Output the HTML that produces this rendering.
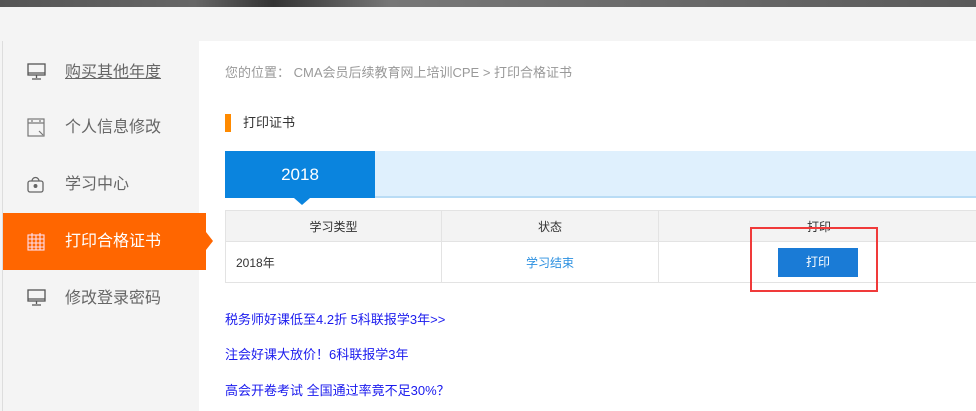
<!DOCTYPE html>
<html><head><meta charset="utf-8"><style>
*{margin:0;padding:0;box-sizing:border-box}
body{width:976px;height:411px;overflow:hidden;background:#f4f4f4;font-family:"Liberation Sans","Noto Sans CJK SC",sans-serif;position:relative}
.top{position:absolute;left:0;top:0;width:976px;height:7px;background:linear-gradient(90deg,#555 0%,#666 20%,#333 28%,#777 40%,#5a5a5a 100%)}
.side{position:absolute;left:2px;top:41px;width:197px;height:370px;background:#f4f4f4;border-left:1px solid #ddd;z-index:2}
.item{position:absolute;left:0;width:197px;height:57px;font-size:16px;color:#666;line-height:57px;padding-left:62px}
.item svg{position:absolute;left:24px;top:19px}
.act{background:#ff6600;color:#fff;width:203px}
.act:after{content:"";position:absolute;right:-7px;top:19px;border-left:7px solid #ff6600;border-top:9px solid transparent;border-bottom:9px solid transparent}
.main{position:absolute;left:199px;top:41px;width:777px;height:370px;background:#fff}
.crumb{position:absolute;left:26px;top:21px;font-size:13px;color:#999}
.ttl{position:absolute;left:26px;top:73px;font-size:13px;color:#333;padding-left:18px;line-height:18px}
.ttl:before{content:"";position:absolute;left:0;top:0;width:6px;height:18px;background:#ff8a00}
.bar{position:absolute;left:26px;top:110px;width:760px;height:47px;background:#dff0fd;border-bottom:2px solid #b9dcf5}
.tab{position:absolute;left:26px;top:110px;width:150px;height:47px;background:#0a84de;color:#fff;font-size:17px;text-align:center;line-height:47px}
.tri{position:absolute;left:95px;top:157px;border-top:7px solid #0a84de;border-left:8px solid transparent;border-right:8px solid transparent}
table{position:absolute;left:26px;top:169px;border-collapse:collapse;font-size:12px;color:#333;table-layout:fixed;width:800px}
td{border:1px solid #e3e3e3;height:31px;text-align:center}
tr.h td{background:#f3f3f3}
tr.d td{height:41px;background:#fff}
.btn{display:inline-block;width:80px;height:29px;background:#1a7bd6;color:#fff;line-height:29px;text-align:center}
.red{position:absolute;left:551px;top:186px;width:128px;height:65px;border:2px solid #f03a3a}
.lk{position:absolute;left:26px;font-size:13px;color:#1a1aee}
</style></head><body>
<div class="top"></div>
<div class="side">
<div class="item" style="top:3px"><svg width="20" height="18" viewBox="0 0 20 18" fill="none" stroke="#555" stroke-width="1.3"><rect x="1" y="1" width="17" height="11"/><path d="M1 10h17M9.5 12v3M5 16h9"/></svg><span style="text-decoration:underline">购买其他年度</span></div>
<div class="item" style="top:58px"><svg width="20" height="20" viewBox="0 0 20 20" fill="none" stroke="#777" stroke-width="1.2"><rect x="1" y="1" width="16" height="17"/><path d="M1 5h16M5 2v2M13 2v2M12 13l4 4"/></svg>个人信息修改</div>
<div class="item" style="top:115px"><svg width="20" height="20" viewBox="0 0 20 20" fill="none" stroke="#666" stroke-width="1.3"><rect x="1" y="6" width="15" height="11" rx="2"/><path d="M5 6a3.5 3.5 0 0 1 7 0"/><circle cx="8.5" cy="11" r="1.3" fill="#666"/></svg>学习中心</div>
<div class="item act" style="top:172px"><svg width="20" height="20" viewBox="0 0 20 20" fill="none" stroke="#fde" stroke-width="1.1"><rect x="1" y="3" width="16" height="15"/><path d="M1 7h16M1 11h16M1 15h16M5 3v15M9 3v15M13 3v15M5 1v3M13 1v3"/></svg>打印合格证书</div>
<div class="item" style="top:229px"><svg width="20" height="18" viewBox="0 0 20 18" fill="none" stroke="#555" stroke-width="1.3"><rect x="1" y="1" width="17" height="11"/><path d="M1 10h17M9.5 12v3M5 16h9"/></svg>修改登录密码</div>
</div>
<div class="main">
<div class="crumb">您的位置： CMA会员后续教育网上培训CPE &gt; 打印合格证书</div>
<div class="ttl">打印证书</div>
<div class="bar"></div>
<div class="tab">2018</div>
<div class="tri"></div>
<table>
<colgroup><col style="width:216px"><col style="width:217px"><col style="width:367px"></colgroup>
<tr class="h"><td>学习类型</td><td>状态</td><td style="text-align:left;padding-left:148px">打印</td></tr>
<tr class="d"><td style="text-align:left;padding-left:10px">2018年</td><td style="color:#2a8fe0">学习结束</td><td style="text-align:left;padding-left:119px"><span class="btn">打印</span></td></tr>
</table>
<div class="red"></div>
<div class="lk" style="top:268px">税务师好课低至4.2折 5科联报学3年&gt;&gt;</div>
<div class="lk" style="top:303px">注会好课大放价！6科联报学3年</div>
<div class="lk" style="top:339px">高会开卷考试 全国通过率竟不足30%？</div>
</div>
</body></html>
